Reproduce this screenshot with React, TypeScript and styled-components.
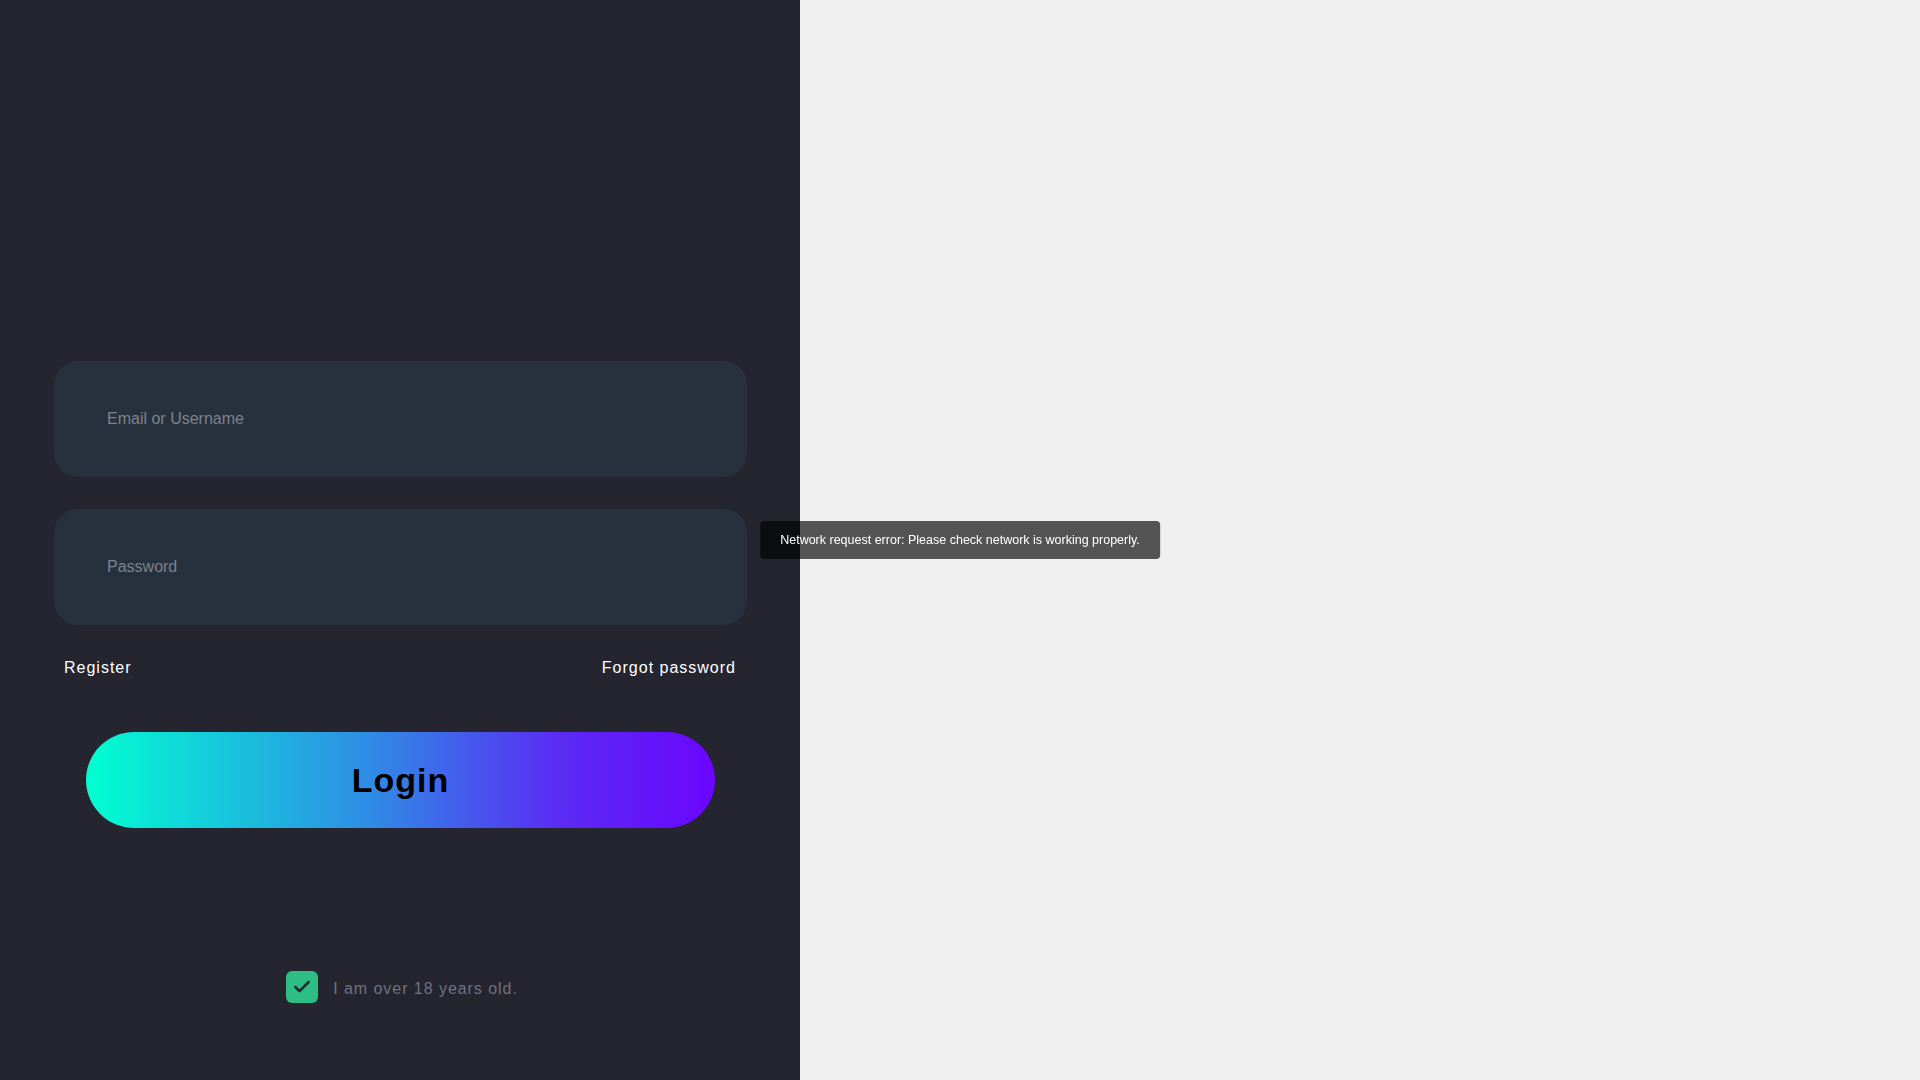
import React from "react"
import styled, { createGlobalStyle } from "styled-components"

const GlobalStyle = createGlobalStyle`
  html, body {
    margin: 0;
    padding: 0;
    height: 100%;
  }
  body {
    font-family: "Liberation Sans", Arial, sans-serif;
    background: #f0f0f0;
  }
`

const Page = styled.div`
  display: flex;
  min-height: 100vh;
  background: #f0f0f0;
`

const Panel = styled.div`
  width: 800px;
  min-height: 100vh;
  box-sizing: border-box;
  background: #24252f;
  display: flex;
  flex-direction: column;
  padding: 361px 53px 0 54px;
`

const Field = styled.div<{ $gap?: number }>`
  height: 116px;
  border-radius: 24px;
  background: #27313d;
  display: flex;
  align-items: center;
  padding: 0 53px;
  margin-top: ${p => p.$gap || 0}px;
`

const Input = styled.input`
  flex: 1;
  border: none;
  outline: none;
  padding: 0;
  background: transparent;
  font-family: "Liberation Sans", Arial, sans-serif;
  font-size: 16px;
  color: #d8dbe0;

  &::placeholder {
    color: #7d838b;
  }
`

const LinksRow = styled.div`
  display: flex;
  justify-content: space-between;
  padding: 0 11px 0 10px;
  margin-top: 33px;
`

const Link = styled.a`
  color: #ffffff;
  font-size: 16px;
  line-height: 20px;
  letter-spacing: 1px;
  cursor: pointer;
`

const LoginButton = styled.button`
  margin: 54px 32px 0 32px;
  height: 96px;
  border: none;
  border-radius: 48px;
  background: linear-gradient(90deg, #00ffd1 0%, #2f8ce6 45%, #5a2cf3 75%, #6b05ff 100%);
  color: #000;
  font-family: "Liberation Sans", Arial, sans-serif;
  font-weight: bold;
  font-size: 34px;
  letter-spacing: 1px;
  cursor: pointer;
`

const AgeRow = styled.label`
  margin-top: 143px;
  padding-left: 3px;
  display: flex;
  align-items: center;
  justify-content: center;
  gap: 15px;
  cursor: pointer;
`

const CheckBox = styled.span`
  width: 32px;
  height: 32px;
  border-radius: 6px;
  background: #2ebd85;
  display: flex;
  align-items: center;
  justify-content: center;
`

const AgeText = styled.span`
  color: #6f7280;
  font-size: 16px;
  line-height: 20px;
  padding-top: 3px;
  letter-spacing: 0.95px;
`

const Toast = styled.div`
  position: fixed;
  left: 50%;
  top: 50%;
  transform: translate(-50%, -50%);
  background: rgba(0, 0, 0, 0.65);
  color: #ffffff;
  font-size: 12.5px;
  line-height: 38px;
  padding: 0 20px;
  border-radius: 4px;
  white-space: nowrap;
`

const App = () => {
  return (
    <Page>
      <GlobalStyle />
      <Panel>
        <Field>
          <Input placeholder="Email or Username" />
        </Field>
        <Field $gap={32}>
          <Input type="password" placeholder="Password" />
        </Field>
        <LinksRow>
          <Link>Register</Link>
          <Link>Forgot password</Link>
        </LinksRow>
        <LoginButton>Login</LoginButton>
        <AgeRow>
          <CheckBox>
            <svg width="20" height="20" viewBox="0 0 24 24" fill="none" stroke="#1f2b2c" strokeWidth="3" strokeLinecap="round" strokeLinejoin="round">
              <polyline points="20 6 9 17 4 12" />
            </svg>
          </CheckBox>
          <AgeText>I am over 18 years old.</AgeText>
        </AgeRow>
      </Panel>
      <Toast>Network request error: Please check network is working properly.</Toast>
    </Page>
  )
}

export default App
